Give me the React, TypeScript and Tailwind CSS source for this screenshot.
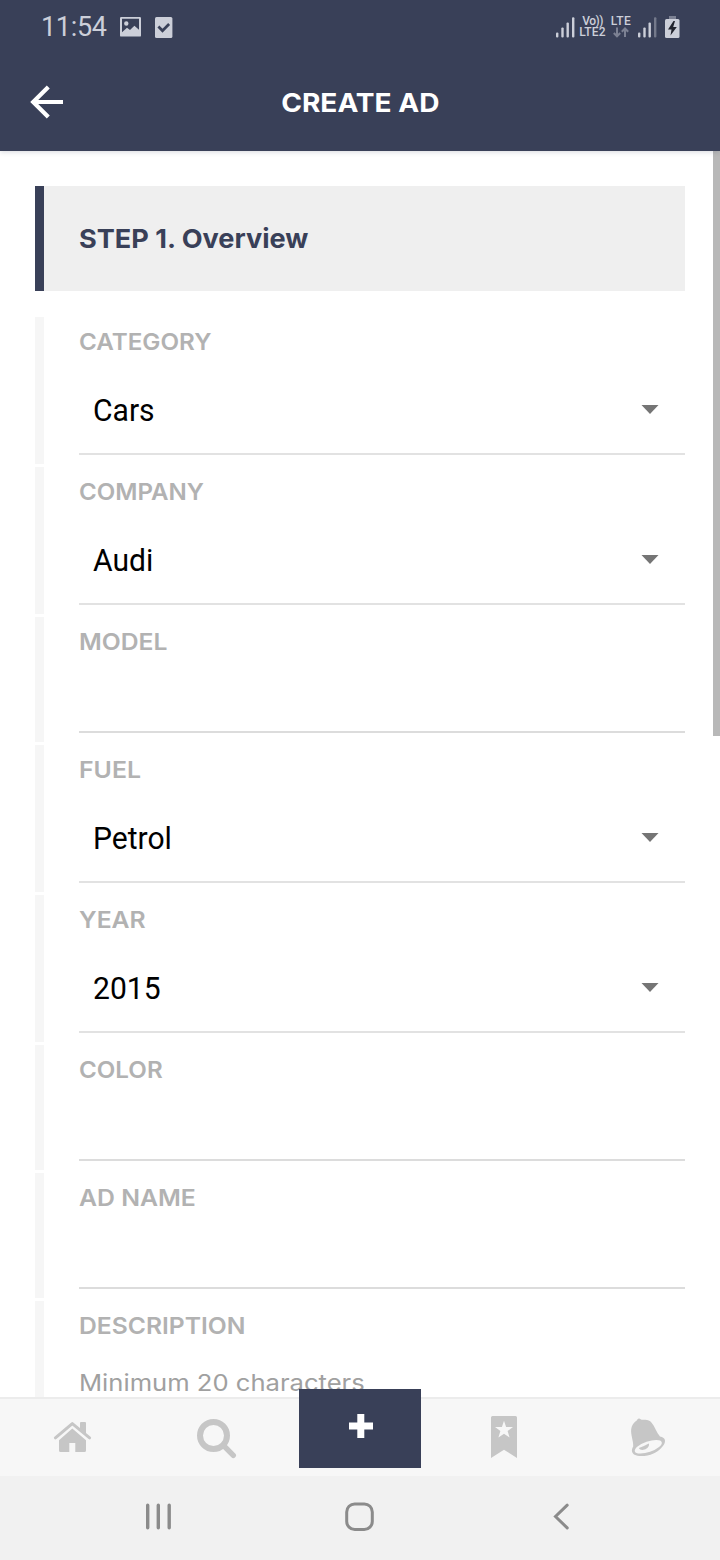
import type { ReactNode } from "react";

/* ========= Types ========= */
type Field = {
  label: string;
  stretch: string;
  kind: "select" | "text";
  value?: string;
};

/* ========= Data ========= */
const FIELDS: Field[] = [
  { label: "CATEGORY", stretch: "scale-x-[1.052]", kind: "select", value: "Cars" },
  { label: "COMPANY", stretch: "scale-x-[1.047]", kind: "select", value: "Audi" },
  { label: "MODEL", stretch: "scale-x-[1.073]", kind: "text" },
  { label: "FUEL", stretch: "scale-x-[1.08]", kind: "select", value: "Petrol" },
  { label: "YEAR", stretch: "scale-x-[1.075]", kind: "select", value: "2015" },
  { label: "COLOR", stretch: "scale-x-[1.05]", kind: "text" },
  { label: "AD NAME", stretch: "scale-x-[1.077]", kind: "text" },
];

/* ========= Status bar ========= */
function Signal({ weak }: { weak?: boolean }) {
  return (
    <svg width="19" height="21" viewBox="0 0 19 21" fill="#cccfd9">
      <rect x="0" y="15.5" width="2.4" height="5" rx="1" />
      <rect x="5.3" y="10.5" width="2.4" height="10" rx="1" />
      <rect x="10.5" y="5.5" width="2.4" height="15" rx="1" />
      <rect x="16" y="0.3" width="2.4" height="20.2" rx="1" opacity={weak ? 0.4 : 1} />
    </svg>
  );
}

function StatusBar() {
  return (
    <div className="flex h-[54px] items-center pr-[40px] pl-[41px] font-['Roboto',sans-serif] text-[#cccfd9]">
      <span className="w-[79px] text-[27px] leading-[54px] tracking-[-0.3px]">11:54</span>
      <svg width="21" height="20" viewBox="0 0 21 20">
        <path
          fillRule="evenodd"
          fill="#cccfd9"
          d="M1.2 0h18.6Q21 0 21 1.2v17.2q0 1.2-1.2 1.2H1.2Q0 19.6 0 18.4V1.2Q0 0 1.2 0zM2 1.8v13.4l5-4.4 3 2.2 4.4-4.2 4.6 4V1.8zM6.3 4.3a2.2 2.2 0 1 1 0 4.4a2.2 2.2 0 1 1 0-4.4z"
        />
      </svg>
      <svg className="ml-[14px]" width="18" height="21" viewBox="0 0 18 21">
        <rect width="17.4" height="21" rx="1.5" fill="#cccfd9" />
        <path d="M3.4 9.5l4.100 4.200 6.600-6.700" fill="none" stroke="#394058" strokeWidth="2.7" />
      </svg>
      <div className="ml-auto flex items-center">
        <Signal />
        <div className="ml-[3px] flex w-[29px] flex-col items-center text-[12px] leading-[11px] font-medium">
          <span className="tracking-[-0.5px]">Vo))</span>
          <span className="tracking-[0.2px]">LTE2</span>
        </div>
        <div className="ml-[1px] flex w-[26px] flex-col items-center text-[12px] leading-[11px] font-medium">
          <span className="tracking-[0.4px]">LTE</span>
          <svg width="16" height="11" viewBox="0 0 16 11" fill="none" stroke="#7c8193" strokeWidth="2">
            <path d="M4 0.5v8.500M0.8 6L4 9.300 7.200 6M12 10V1.500M8.800 4.800L12 1.500l3.200 3.300" />
          </svg>
        </div>
        <div className="ml-[4px]">
          <Signal weak />
        </div>
        <svg className="ml-[8px]" width="15" height="22" viewBox="0 0 15 22">
          <path d="M4 0h7v3H4z" fill="#7c8193" />
          <rect y="3" width="14.5" height="19" rx="1.5" fill="#cccfd9" />
          <path d="M8.5 5L3 13.500h3.500L5.500 19.500 11.800 11H8.200L10 5z" fill="#22242e" />
        </svg>
      </div>
    </div>
  );
}

/* ========= Form ========= */
function Label({ stretch, children }: { stretch: string; children: ReactNode }) {
  return (
    <div className="pt-[11px] text-[23px] leading-[29px] font-semibold text-[#b2b2b2]">
      <span className={`inline-block origin-left align-top ${stretch}`}>{children}</span>
    </div>
  );
}

function FieldRow({ field }: { field: Field }) {
  return (
    <div className="border-l-[9px] border-[#f6f6f6] pb-[9px] pl-[35px]">
      <Label stretch={field.stretch}>{field.label}</Label>
      {field.kind === "select" ? (
        <div className="mt-[8px] flex h-[90px] items-center justify-between border-b-2 border-[#e2e2e2] pr-[26px] pl-[14px]">
          <span className="origin-left scale-x-[0.97] pt-[3px] font-['Roboto',sans-serif] text-[31px] leading-[36px] text-black">
            {field.value}
          </span>
          <svg width="18" height="9" viewBox="0 0 18 9">
            <path d="M0.5 0h17L9 9z" fill="#757575" />
          </svg>
        </div>
      ) : (
        <div className="h-[76px] border-b-2 border-[#dcdcdc]" />
      )}
    </div>
  );
}

/* ========= Bottom tabs ========= */
function TabIcon({ children }: { children: ReactNode }) {
  return (
    <div className="flex flex-1 items-center justify-center">
      <svg width="48" height="49" viewBox="0 0 48 49" fill="#c6c6c6">
        {children}
      </svg>
    </div>
  );
}

function TabBar() {
  return (
    <nav className="flex h-[79px] border-t-2 border-[#ececec] bg-[#f7f7f7]">
      <TabIcon>
        <path
          d="M7.4 24.8L24.3 10.6 41.6 24.8"
          fill="none"
          stroke="#c6c6c6"
          strokeWidth="3"
          strokeLinecap="round"
          strokeLinejoin="round"
        />
        <path d="M32 10q0-1 1-1h4q1 0 1 1v11l-6-5z" />
        <path d="M24.3 15.6L38 27.2V37.5q0 1.5-1.5 1.5H27.3V30h-6v9h-8.8q-1.5 0-1.5-1.5V27.2z" />
      </TabIcon>
      <TabIcon>
        <circle cx="21.5" cy="22.5" r="13.5" fill="none" stroke="#c6c6c6" strokeWidth="6" />
        <path d="M32 33l9.3 9.3" stroke="#c6c6c6" strokeWidth="5.4" strokeLinecap="round" />
      </TabIcon>
      <div className="flex flex-1 justify-center">
        <button className="relative -mt-[10px] flex h-[79px] w-[122px] items-center justify-center bg-[#394058] pb-[5px] pl-px">
          <svg width="24" height="24" viewBox="0 0 24 24" fill="#fff">
            <path d="M8.3 0h7v8.500H24v7h-8.700V24h-7v-8.500H0v-7h8.300z" />
          </svg>
        </button>
      </div>
      <TabIcon>
        <path
          fillRule="evenodd"
          d="M12.5 3h23Q37 3 37 4.500V45L24 36.800 11 45V4.500Q11 3 12.500 3zM24 7.700l2.100 6.300H33l-5.400 4 2 6.600-5.600-3.900-5.600 3.900 2-6.600-5.400-4h6.900z"
        />
      </TabIcon>
      <TabIcon>
        <path d="M13 7.200Q13.500 5.200 15.300 5.500L17.500 6.800C21 6.800 25 6.800 27 9C31 13.500 32.500 19.500 36 23.600C38.500 24.200 41.200 25.200 41 28.200C40.800 32.500 35 38 29.500 40.500C23 43.500 14.500 43.800 10.500 41.800C7.500 40 7.200 36.800 9.200 33.600C9.600 28 6.500 22 7.200 16C7.800 12 9.800 9.500 13 7.200z" />
        <ellipse
          cx="24.3"
          cy="33.8"
          rx="14.2"
          ry="5.3"
          transform="rotate(-19 24.3 33.8)"
          fill="#f7f7f7"
        />
        <path d="M14.8 35C18.500 33.600 21.500 32.300 24.800 30.500C25.800 33 23.500 35.600 20.500 36.600C18 37.300 15.600 36.800 14.800 35z" />
      </TabIcon>
    </nav>
  );
}

/* ========= Android navigation ========= */
function SystemNav() {
  return (
    <div className="flex h-[84px] items-start bg-[#f1f1f1] pt-[26px] pl-[144px]">
      <svg width="30" height="30" viewBox="0 0 30 30" stroke="#8b8b8b" strokeWidth="3.4" strokeLinecap="round">
        <path d="M3.7 3.300v22.500M14.300 3.300v22.500M25.200 3.300v22.500" />
      </svg>
      <svg className="ml-[170px]" width="30" height="30" viewBox="0 0 30 30" fill="none" stroke="#8b8b8b" strokeWidth="3">
        <rect x="2.7" y="1.9" width="25.6" height="25.6" rx="8" />
      </svg>
      <svg
        className="ml-[177px]"
        width="20"
        height="30"
        viewBox="0 0 20 30"
        fill="none"
        stroke="#8b8b8b"
        strokeWidth="3"
        strokeLinecap="round"
      >
        <path d="M16.200 3.200L4.500 14.500 16.200 25.900" />
      </svg>
    </div>
  );
}

/* ========= Main Screen ========= */
export default function CreateAdScreen() {
  return (
    <div className="flex h-[1560px] w-[720px] flex-col overflow-hidden bg-white font-['Inter',sans-serif]">
      {/* Header */}
      <header className="relative h-[151px] shrink-0 bg-[#394058] shadow-[0_1px_5px_rgba(57,64,88,0.2)]">
        <StatusBar />
        <div className="grid h-[97px] grid-cols-[1fr_auto_1fr] items-center">
          <svg className="mb-[2px] ml-[30px]" width="34" height="34" viewBox="0 0 34 34" fill="none" stroke="#fff" strokeWidth="4.2">
            <path d="M18.300 2L3.200 17l15.100 15M3.500 17H33" />
          </svg>
          <h1 className="scale-x-[1.08] text-[26px] leading-[32px] font-bold text-white">
            CREATE AD
          </h1>
        </div>
      </header>

      {/* Scrolling form */}
      <main className="flex min-h-0 flex-1 overflow-hidden bg-white">
        <div className="w-[685px] shrink-0 pt-[35px] pl-[35px]">
          <div className="flex h-[105px] items-center border-l-[9px] border-[#394058] bg-[#efefef] pl-[35px]">
            <h2 className="origin-left scale-x-[1.043] text-[26px] leading-[32px] font-bold text-[#394058]">
              STEP 1. Overview
            </h2>
          </div>
          <div className="mt-[26px] flex flex-col gap-[3px]">
            {FIELDS.map((field) => (
              <FieldRow key={field.label} field={field} />
            ))}
            <div className="h-[150px] border-l-[9px] border-[#f6f6f6] pl-[35px]">
              <Label stretch="scale-x-[1.072]">DESCRIPTION</Label>
              <p className="mt-[27px] w-max origin-left scale-x-[1.113] text-[23px] leading-[30px] text-[#a0a0a0]">
                Minimum 20 characters
              </p>
            </div>
          </div>
        </div>
        <div className="ml-auto h-[585px] w-[7px] bg-[#b8b8b8]" />
      </main>

      <TabBar />
      <SystemNav />
    </div>
  );
}
